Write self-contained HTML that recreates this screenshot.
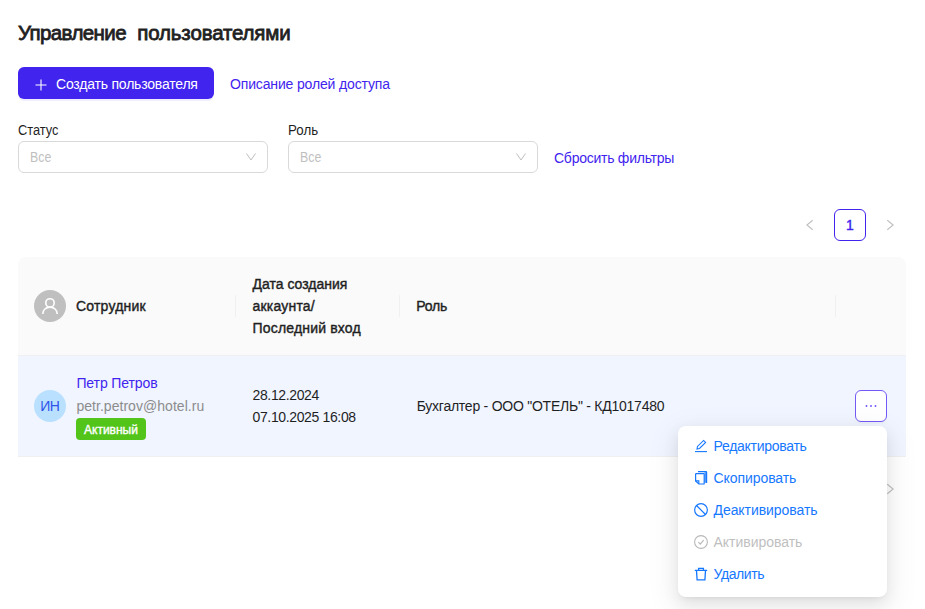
<!DOCTYPE html>
<html lang="ru">
<head>
<meta charset="utf-8">
<title>Управление пользователями</title>
<style>
*{box-sizing:border-box;margin:0;padding:0}
html,body{width:925px;height:609px;overflow:hidden;background:#fff}
body{font-family:"Liberation Sans",sans-serif;font-size:14px;color:#1f1f1f;position:relative}
a{text-decoration:none;color:#4124ee}
.abs{position:absolute;white-space:nowrap}
h1{position:absolute;left:18px;top:21px;font-size:20.5px;line-height:24px;font-weight:400;-webkit-text-stroke:.8px #1f1f1f;color:#1f1f1f;white-space:nowrap;letter-spacing:-.6px;word-spacing:6.2px}
h1 span{letter-spacing:-.15px}
.btn-primary{position:absolute;left:18px;top:67px;width:196px;height:32px;border-radius:6px;background:#4124ee;color:#fff;font-size:14px;line-height:32px;border:none;box-shadow:0 2px 0 rgba(64,36,232,.08)}
.btn-primary svg{position:absolute;left:16px;top:11px}
.btn-primary span{position:absolute;left:38px;top:1px;white-space:nowrap;letter-spacing:-.2px}
.label{position:absolute;font-size:14px;line-height:22px;color:#1f1f1f}
.select{position:absolute;width:250px;height:32px;border:1px solid #d9d9d9;border-radius:6px;background:#fff;top:141px}
.select span{position:absolute;left:11px;top:0;line-height:30px;color:#bfbfbf;font-size:14px;transform:scaleX(.88);transform-origin:0 0}
.select svg{position:absolute;right:9px;top:9px}
.pager{position:absolute;top:210px;height:30px}
.pg-item{position:absolute;left:834px;top:209px;width:32px;height:32px;border:1px solid #4124ee;border-radius:6px;color:#4124ee;font-weight:400;-webkit-text-stroke:.4px #4124ee;text-align:center;line-height:30px;font-size:14px;background:#fff}
table.t{position:absolute;left:18px;top:257px;width:888px;border-collapse:separate;border-spacing:0}
.thead{position:absolute;left:18px;top:257px;width:888px;height:99px;background:#fafafa;border-radius:8px 8px 0 0;border-bottom:1px solid #f0f0f0}
.trow{position:absolute;left:18px;top:356px;width:888px;height:101px;background:#f0f5ff;border-bottom:1px solid #f0f0f0}
.sep{position:absolute;top:38px;width:1px;height:22px;background:#f0f0f0}
.th{position:absolute;font-weight:400;-webkit-text-stroke:.4px #1f1f1f;font-size:14px;line-height:22px;color:#1f1f1f;white-space:nowrap}
.av{position:absolute;left:16px;width:32px;height:32px;border-radius:50%}
.td{position:absolute;font-size:14px;line-height:22px;white-space:nowrap}
.tag{position:absolute;left:58px;top:62px;width:70px;height:22px;border-radius:4px;background:#52c41a;color:#fff;font-size:12px;font-weight:400;-webkit-text-stroke:.35px #fff;line-height:24px;text-align:center}
.more{position:absolute;left:837px;top:34px;width:32px;height:32px;border:1px solid #7459f7;border-radius:6px;background:#fff;box-shadow:0 2px 0 rgba(0,0,0,.02)}
.menu{position:absolute;left:678px;top:426px;width:209px;height:171px;background:#fff;border-radius:8px;box-shadow:0 6px 16px 0 rgba(0,0,0,.08),0 3px 6px -4px rgba(0,0,0,.12),0 9px 28px 8px rgba(0,0,0,.05)}
.mi{position:absolute;left:16px;height:22px;line-height:22px;font-size:14px;color:#1677ff;white-space:nowrap}
.mi svg{position:absolute;left:0;top:4px}
.mi span{position:absolute;left:19.5px;top:0}
.mi.dis{color:#bfbfbf}
</style>
</head>
<body>
<h1>Управление <span>пользователями</span></h1>

<button class="btn-primary">
  <svg width="14" height="14" viewBox="0 0 14 14"><path d="M7 1.5v11M1.5 7h11" stroke="#fff" stroke-width="1.1" fill="none"/></svg>
  <span>Создать пользователя</span>
</button>
<a class="abs" style="left:230px;top:73px;line-height:22px;letter-spacing:-.15px">Описание ролей доступа</a>

<div class="label" style="left:18px;top:119px;transform:scaleX(.915);transform-origin:0 0">Статус</div>
<div class="select" style="left:18px"><span>Все</span>
  <svg width="14" height="14" viewBox="0 0 14 14"><path d="M2.5 2.5L7 9l4.5-6.5" stroke="#bfbfbf" stroke-width="1" fill="none"/></svg>
</div>
<div class="label" style="left:288.3px;top:119px;transform:scaleX(.95);transform-origin:0 0">Роль</div>
<div class="select" style="left:288px"><span>Все</span>
  <svg width="14" height="14" viewBox="0 0 14 14"><path d="M2.5 2.5L7 9l4.5-6.5" stroke="#bfbfbf" stroke-width="1" fill="none"/></svg>
</div>
<a class="abs" style="left:554px;top:147px;line-height:22px;letter-spacing:-.25px">Сбросить фильтры</a>

<svg class="abs" style="left:804px;top:218px" width="12" height="14" viewBox="0 0 12 14"><path d="M8.7 2.3L2.9 7l5.8 4.7" stroke="#bfbfbf" stroke-width="1.1" fill="none"/></svg>
<div class="pg-item">1</div>
<svg class="abs" style="left:884px;top:218px" width="12" height="14" viewBox="0 0 12 14"><path d="M3.3 2.3L9.1 7l-5.8 4.7" stroke="#bfbfbf" stroke-width="1.1" fill="none"/></svg>

<div class="thead">
  <div class="av" style="top:33px;background:#bfbfbf">
    <svg width="32" height="32" viewBox="0 0 32 32"><circle cx="16" cy="12.9" r="4.2" stroke="#fff" stroke-width="1.6" fill="none"/><path d="M8.8 24c0-4.1 3.2-6.9 7.2-6.9s7.2 2.8 7.2 6.9" stroke="#fff" stroke-width="1.6" fill="none"/></svg>
  </div>
  <div class="th" style="left:58px;top:38px;letter-spacing:.2px">Сотрудник</div>
  <div class="sep" style="left:217px"></div>
  <div class="th" style="left:234.5px;top:16px">Дата создания<br><span style="letter-spacing:.2px">аккаунта/</span><br><span style="letter-spacing:.18px">Последний вход</span></div>
  <div class="sep" style="left:381px"></div>
  <div class="th" style="left:398.3px;top:38px;letter-spacing:-.25px">Роль</div>
  <div class="sep" style="left:817px"></div>
</div>

<div class="trow">
  <div class="av" style="top:34px;background:#bae0ff;color:#2f54eb;text-align:center;line-height:32px;font-size:14px;letter-spacing:-.7px;text-indent:-.7px">ИН</div>
  <a class="td" style="left:58.4px;top:16px;letter-spacing:-.1px">Петр Петров</a>
  <div class="td" style="left:58.4px;top:39px;color:#8c8c8c;letter-spacing:.04px">petr.petrov@hotel.ru</div>
  <div class="tag">Активный</div>
  <div class="td" style="left:234.5px;top:28px;letter-spacing:-.36px">28.12.2024<br>07.10.2025 16:08</div>
  <div class="td" style="left:398.7px;top:39px;letter-spacing:-.245px">Бухгалтер - ООО "ОТЕЛЬ" - КД1017480</div>
  <div class="more">
    <svg width="30" height="30" viewBox="0 0 30 30"><circle cx="10.5" cy="15" r=".95" fill="#6e52f6"/><circle cx="15" cy="15" r=".95" fill="#6e52f6"/><circle cx="19.5" cy="15" r=".95" fill="#6e52f6"/></svg>
  </div>
</div>

<svg class="abs" style="left:884px;top:482px" width="12" height="14" viewBox="0 0 12 14"><path d="M3.3 2.3L9.1 7l-5.8 4.7" stroke="#bfbfbf" stroke-width="1.1" fill="none"/></svg>

<div class="menu">
  <div class="mi" style="top:9px"><svg width="14" height="14" viewBox="0 0 14 14"><path d="M1 12.6h12" stroke="#1677ff" stroke-width="1.1"/><path d="M3 10l.5-2.6L9.6 1.4l2 2L5.5 9.5z" stroke="#1677ff" stroke-width="1.1" fill="none"/></svg><span style="letter-spacing:-.28px">Редактировать</span></div>
  <div class="mi" style="top:41px"><svg width="14" height="14" viewBox="0 0 14 14"><path d="M2.2 2.7h7.4a.6.6 0 0 1 .6.6v9.1a.6.6 0 0 1-.6.6H4.8L1.6 9.9V3.3a.6.6 0 0 1 .6-.6z" stroke="#1677ff" stroke-width="1.2" fill="none"/><path d="M4.8 13v-3.1H1.6" stroke="#1677ff" stroke-width="1.1" fill="none"/><path d="M4 .7h8.1a.5.5 0 0 1 .5.5v10.7" stroke="#1677ff" stroke-width="1.2" fill="none"/><path d="M11.4 1.2v10.6" stroke="#1677ff" stroke-width="1.8" opacity=".75"/></svg><span style="letter-spacing:-.07px">Скопировать</span></div>
  <div class="mi" style="top:73px"><svg width="14" height="14" viewBox="0 0 14 14"><circle cx="7" cy="7" r="6.35" stroke="#1677ff" stroke-width="1.2" fill="none"/><path d="M2.5 2.5l9 9" stroke="#1677ff" stroke-width="1.2"/></svg><span style="letter-spacing:-.06px">Деактивировать</span></div>
  <div class="mi dis" style="top:105px"><svg width="14" height="14" viewBox="0 0 14 14"><circle cx="7" cy="7" r="6.4" stroke="#b8b8b8" stroke-width="1.1" fill="none"/><path d="M4.4 7.1l1.9 2.1 3.4-4.1" stroke="#b8b8b8" stroke-width="1.1" fill="none"/></svg><span style="letter-spacing:-.03px">Активировать</span></div>
  <div class="mi" style="top:137px"><svg width="14" height="14" viewBox="0 0 14 14"><path d="M.8 3.4h12.4M4.6 3.2V1.4h4.8v1.8M2.5 3.6l.6 9.2h7.8l.6-9.2" stroke="#1677ff" stroke-width="1.3" fill="none"/></svg><span style="letter-spacing:-.4px">Удалить</span></div>
</div>
</body>
</html>
